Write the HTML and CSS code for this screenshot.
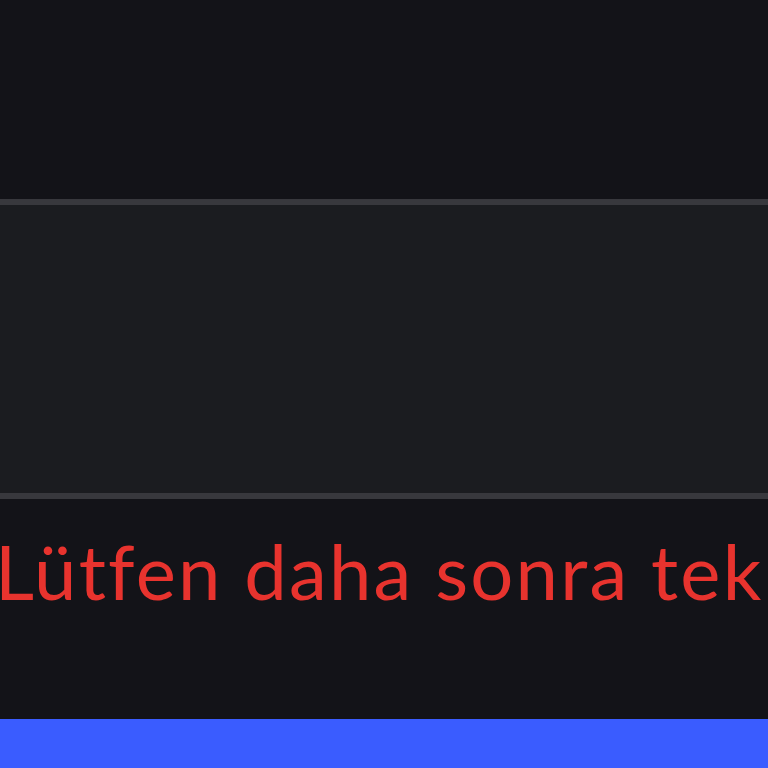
FILE: index.html
```html
<!DOCTYPE html>
<html>
<head>
<meta charset="utf-8">
<link rel="stylesheet" href="styles.css">
</head>
<body>
<div class="page">
  <div class="top"></div>
  <div class="panel"></div>
  <div class="message"><span class="error">Lütfen daha sonra tekrar deneyin.</span></div>
  <div class="footer-bar"></div>
</div>
</body>
</html>
```
FILE: styles.css
```css
html, body {
  margin: 0;
  padding: 0;
  background: #131318;
  overflow: hidden;
}
.page {
  width: 768px;
  height: 768px;
  display: flex;
  flex-direction: column;
  background: #131318;
}
.top {
  height: 199px;
  flex: none;
}
.panel {
  height: 288px;
  flex: none;
  background: #1b1c20;
  border-top: 6px solid #38383d;
  border-bottom: 6px solid #38383d;
}
.message {
  height: 220px;
  flex: none;
  white-space: nowrap;
  overflow: hidden;
  padding-top: 27px;
  box-sizing: border-box;
}
.error {
  font-family: Lato, "Noto Sans", sans-serif;
  font-size: 76px;
  line-height: 90px;
  letter-spacing: 2.2px;
  color: #e8332e;
  display: block;
  margin-left: -5px;
}
.footer-bar {
  flex: 1;
  background: #3a5cff;
}
```
